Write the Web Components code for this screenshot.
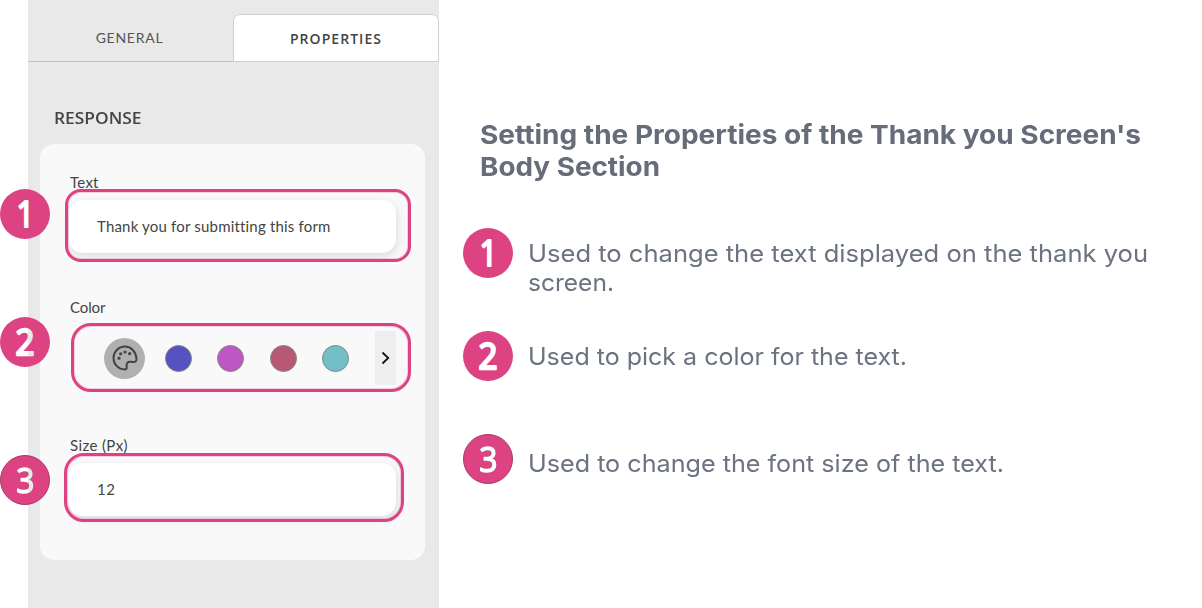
<!DOCTYPE html>
<html lang="en">
<head>
<meta charset="utf-8">
<title>Thank you screen properties</title>
<style>
body{margin:0;background:#fff;width:1202px;height:608px;overflow:hidden;font-family:Lato,"Noto Sans",sans-serif;color:#444}
</style>
</head>
<body>
<help-page></help-page>
<script>
const define=(name,html,setup)=>customElements.define(name,class extends HTMLElement{
  connectedCallback(){
    if(this.shadowRoot)return;
    const root=this.attachShadow({mode:'open'});
    const t=document.createElement('template');
    t.innerHTML=html;
    root.append(t.content.cloneNode(true));
    if(setup)setup(this,root);
  }
});

/* One line of text fitted to a given width: by tracking, or by stretching when "wide" is set */
define('tracked-text',`<style>:host{display:block;white-space:nowrap}span{display:inline-block;transform-origin:0 50%}</style><span><slot></slot></span>`,(el,root)=>{
  const s=root.querySelector('span'),n=el.textContent.length;
  s.style.letterSpacing='0';
  const w=s.getBoundingClientRect().width,goal=+el.getAttribute('width');
  if(el.hasAttribute('wide'))s.style.transform='scaleX('+(goal/w).toFixed(4)+')';
  else s.style.letterSpacing=((goal-w)/(n-1)).toFixed(3)+'px';
});

/* Round numbered marker; "split" tints the digit right of the panel edge */
define('number-badge',`<style>:host{display:block;width:50px;height:50px;flex:none}svg{display:block;overflow:visible}
text{font-family:"Open Sans",sans-serif;font-weight:400;stroke-linejoin:round;text-anchor:middle}</style>
<svg width="50" height="50" viewBox="0 0 50 50"><defs><linearGradient id="g" gradientUnits="userSpaceOnUse" x1="0" x2="50" y1="0" y2="0"><stop offset="0" stop-color="#fff"/><stop class="a" offset="1" stop-color="#fff"/><stop class="b" offset="1" stop-color="#e9e9e9"/></linearGradient></defs>
<circle cx="25" cy="25" r="25" fill="#dd4282"/><g class="d"><text></text></g></svg>`,(el,root)=>{
  const n=el.getAttribute('n'),t=root.querySelector('text');
  t.textContent=n;
  const m={1:[25.6,38.4,.85,37,2.2],2:[25,38.4,.9,37,2.4],3:[25.4,37.8,.9,35.5,1.5]}[n];
  t.setAttribute('transform',`translate(${m[0]} ${m[1]}) scale(${m[2]} 1)`);
  t.style.fontSize=m[3]+'px';
  t.setAttribute('stroke-width',m[4]);
  t.setAttribute('fill','#fff');t.setAttribute('stroke','#fff');
  if(el.hasAttribute('split')){
    const g=root.querySelector('#g'),a=(0-m[0])/m[2],b=(50-m[0])/m[2];
    g.setAttribute('x1',a);g.setAttribute('x2',b);
    g.querySelector('.a').setAttribute('offset',.56);g.querySelector('.b').setAttribute('offset',.56);
    t.setAttribute('fill','url(#g)');t.setAttribute('stroke','url(#g)');
  }
  if(n==='3'){
    const c=root.querySelector('circle');
    c.setAttribute('r',24.5);c.setAttribute('stroke','#a93a6a');
    root.querySelector('.d').style.filter='drop-shadow(0 0 .7px #7d2a4e)';
  }
});

define('tab-bar',`<style>
:host{display:flex;height:48px;padding-top:14px}
div{box-sizing:border-box;display:flex;justify-content:center;align-items:center;height:48px;font-size:14px}
.g{width:205px;border-bottom:1px solid #c2c2c2;color:#555;padding-right:2px}
.p{width:206px;background:#fff;border:1px solid #cfcfcf;border-radius:7px 7px 0 0;font:600 14px "Open Sans",sans-serif;color:#444}
</style><div class="g"><tracked-text width="67">GENERAL</tracked-text></div><div class="p"><tracked-text width="91">PROPERTIES</tracked-text></div>`);

define('form-field',`<style>
:host{display:block;position:relative;font-size:15px}
.l{height:20px;line-height:18px;padding-left:1px}
.ring{position:absolute;box-sizing:border-box;border:3px solid #dd4282;left:var(--rx);top:var(--ry);width:var(--rw);height:var(--rh);border-radius:var(--rr);box-shadow:inset 0 0 0 1px rgba(221,66,130,.22)}
.badge{position:absolute;left:-69px;top:var(--by)}
</style><div class="l"><slot name="label"></slot></div><slot></slot><div class="ring"></div><div class="badge"><slot name="badge"></slot></div>`);

define('text-input',`<style>:host{display:flex;align-items:center;box-sizing:border-box;width:327px;height:53px;padding:0 0 2px 28px;background:#fff;border-radius:14px;box-shadow:1px 3px 8px rgba(0,0,0,.12)}</style><slot></slot>`);

define('color-row',`<style>
:host{display:flex;align-items:center;height:54px;padding-left:35px;width:292px}
.pal{width:41px;height:41px;border-radius:50%;background:#b0b0b0;margin-right:19.5px;flex:none;display:grid;place-items:center}
i{box-sizing:border-box;width:27px;height:27px;border-radius:50%;border:1px solid #858585;margin-right:25.5px;flex:none;background:var(--c)}
.n{width:21px;height:54px;background:#eee;border-radius:2px;margin-left:auto;flex:none;display:grid;place-items:center}
i:nth-of-type(4){margin-right:0}
svg{display:block}
</style>
<div class="pal"><svg width="26" height="26" viewBox="0 0 26 26" fill="none" stroke="#444" stroke-width="2"><path d="M12.8 24.4C15.2 24.2 14.8 22.5 14.6 20.8C14.3 18 15.8 16.6 18.4 16.8L21.5 17.1C23.6 17.2 24.7 15.7 24.5 13.4C23.9 6.6 19.2 1.6 12.8 1.6C6.5 1.6 1.5 6.7 1.5 13C1.5 19.5 6.5 24.4 12.8 24.4Z" stroke-linejoin="round"/><g fill="#444" stroke="none"><circle cx="7" cy="13.2" r="1.6"/><circle cx="8.6" cy="8.8" r="1.6"/><circle cx="13" cy="7" r="1.6"/><circle cx="17.7" cy="8.7" r="1.6"/></g></svg></div>
<i style="--c:#5652c2"></i><i style="--c:#bd57c4"></i><i style="--c:#b95875"></i><i style="--c:#72c0c6"></i>
<div class="n"><svg width="9" height="14" viewBox="0 0 9 14" fill="none" stroke="#111" stroke-width="1.8"><path d="M1.5 1.5L7.2 7L1.5 12.5"/></svg></div>`);

define('settings-panel',`<style>
:host{display:block;box-sizing:border-box;width:411px;height:608px;margin-left:28px;background:#e9e9e9;flex:none}
h2{margin:46px 0 0 26px;height:20px;font:600 15.8px/20px "Open Sans",sans-serif}
.card{box-sizing:border-box;margin:16px 0 0 12px;width:385px;height:416px;border-radius:14px;background:#f9f9f9;padding:29px 0 0 29px}
.f1{--rx:-4px;--ry:16px;--rw:346px;--rh:73px;--rr:16px;--by:16px}
.f2{--rx:2px;--ry:25px;--rw:340px;--rh:69px;--rr:20px;--by:19px;margin-top:45px}
.f3{--rx:-5px;--ry:17px;--rw:340px;--rh:69px;--rr:20px;--by:19px;margin-top:51px}
.f1 text-input{margin-top:7px}.f2 color-row{margin-top:13px}.f3 text-input{margin-top:7px}
</style>
<tab-bar></tab-bar>
<h2><tracked-text width="87.5" wide>RESPONSE</tracked-text></h2>
<div class="card">
<form-field class="f1"><tracked-text slot="label" width="28.5">Text</tracked-text><text-input><tracked-text width="233">Thank you for submitting this form</tracked-text></text-input><number-badge slot="badge" n="1" split></number-badge></form-field>
<form-field class="f2"><tracked-text slot="label" width="35.5">Color</tracked-text><color-row></color-row><number-badge slot="badge" n="2" split></number-badge></form-field>
<form-field class="f3"><tracked-text slot="label" width="57.5">Size (Px)</tracked-text><text-input><tracked-text width="18">12</tracked-text></text-input><number-badge slot="badge" n="3" split></number-badge></form-field>
</div>`);

define('help-item',`<style>:host{display:flex;gap:15px;font-size:24px;line-height:29px}.t{padding-top:var(--t,11px)}</style><slot name="badge"></slot><div class="t"><slot></slot></div>`);

define('help-text',`<style>
:host{display:block;padding:119px 0 0 24px;color:#6b7280;font-family:Inter,"Liberation Sans",sans-serif}
h1{margin:0 0 0 17px;font-size:26px;line-height:32px;font-weight:700;color:#666c79}
.a{margin-top:45px;height:103px}.b{height:103px}.c{--t:15px}
</style>
<h1><tracked-text wide width="661">Setting the Properties of the Thank you Screen's</tracked-text><tracked-text wide width="180">Body Section</tracked-text></h1>
<help-item class="a"><number-badge slot="badge" n="1"></number-badge><tracked-text wide width="620">Used to change the text displayed on the thank you</tracked-text><tracked-text wide width="86">screen.</tracked-text></help-item>
<help-item class="b"><number-badge slot="badge" n="2"></number-badge><tracked-text wide width="379">Used to pick a color for the text.</tracked-text></help-item>
<help-item class="c"><number-badge slot="badge" n="3"></number-badge><tracked-text wide width="476">Used to change the font size of the text.</tracked-text></help-item>`);

define('help-page',`<style>:host{display:flex;width:1202px;height:608px}</style><settings-panel></settings-panel><help-text></help-text>`);
</script>
</body>
</html>
